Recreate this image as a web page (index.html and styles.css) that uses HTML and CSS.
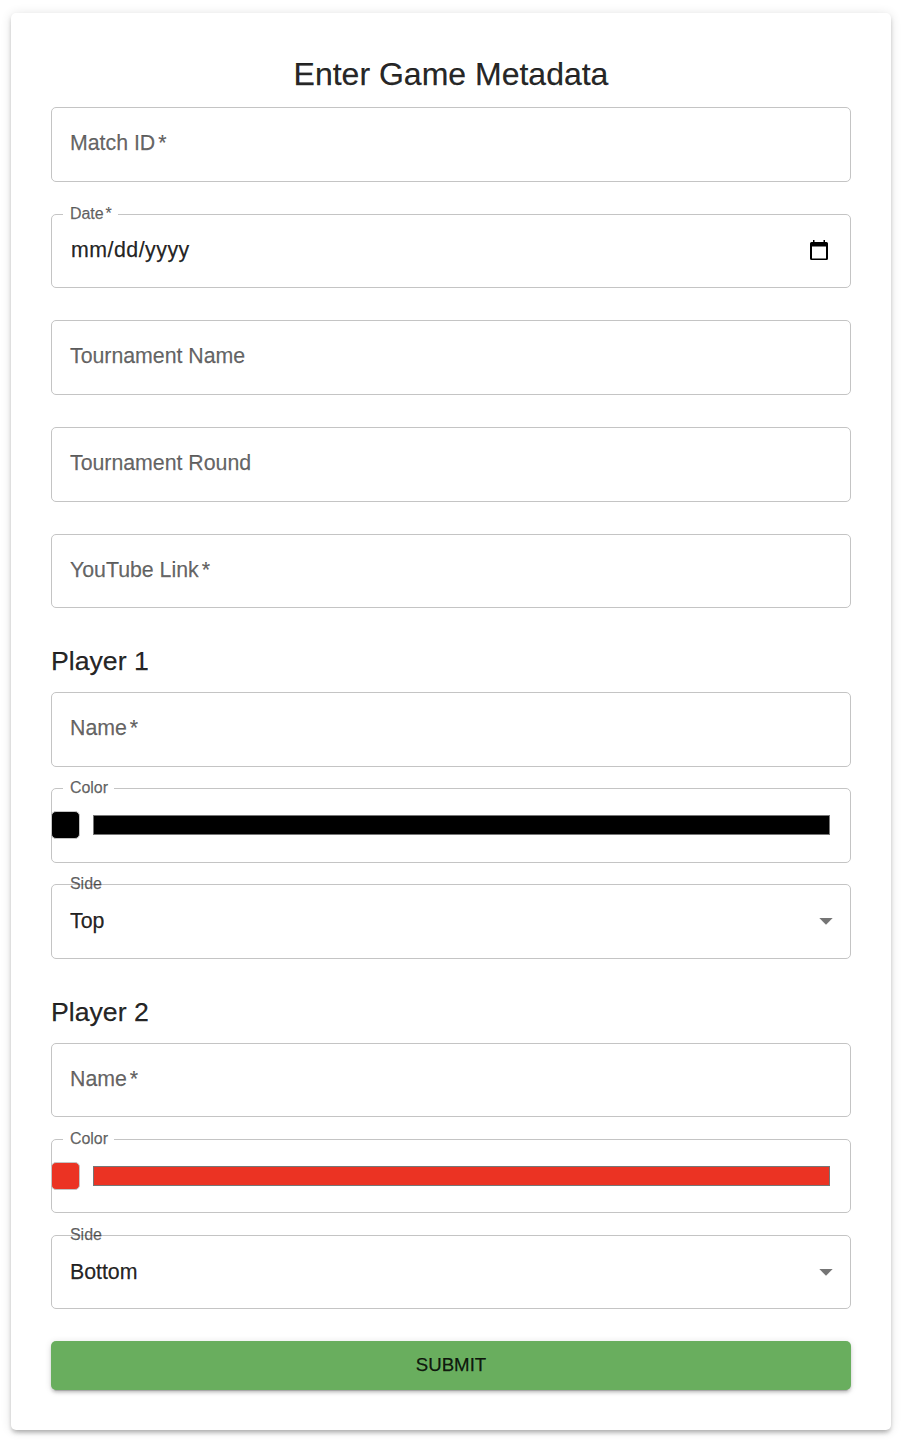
FILE: index.html
```html
<!DOCTYPE html>
<html lang="en">
<head>
<meta charset="utf-8">
<title>Enter Game Metadata</title>
<link rel="stylesheet" href="styles.css">
</head>
<body>
<form class="card">
  <h1 class="title">Enter Game Metadata</h1>
  <div class="fields">
    <div class="field"><span class="label">Match ID<i class="req">*</i></span></div>
    <div class="field short">
      <span class="float notch">Date<i class="req">*</i></span>
      <span class="value date">mm/dd/yyyy</span>
      <svg class="calendar" width="18" height="20" viewBox="0 0 18 20"><path fill="#000" fill-rule="evenodd" d="M3 0h1.500v2h9V0H15v2h1.500q1.500 0 1.500 1.500v15q0 1.500-1.500 1.500h-15Q0 20 0 18.500v-15Q0 2 1.500 2H3zM2 6.500v12h14v-12z"/></svg>
    </div>
    <div class="field"><span class="label">Tournament Name</span></div>
    <div class="field"><span class="label">Tournament Round</span></div>
    <div class="field short"><span class="label">YouTube Link<i class="req">*</i></span></div>
  </div>

  <h2 class="heading">Player 1</h2>
  <div class="player">
    <div class="field"><span class="label">Name<i class="req">*</i></span></div>
    <div class="field color">
      <span class="float notch">Color</span>
      <span class="swatch black"></span>
      <span class="bar black"></span>
    </div>
    <div class="field">
      <span class="float">Side</span>
      <span class="value">Top</span>
      <svg class="arrow" width="14" height="7" viewBox="0 0 14 7"><path fill="#757575" d="M0.300 0h13.400L7 6.670z"/></svg>
    </div>
  </div>

  <h2 class="heading">Player 2</h2>
  <div class="player second">
    <div class="field short"><span class="label">Name<i class="req">*</i></span></div>
    <div class="field short color">
      <span class="float notch">Color</span>
      <span class="swatch red"></span>
      <span class="bar red"></span>
    </div>
    <div class="field short">
      <span class="float">Side</span>
      <span class="value">Bottom</span>
      <svg class="arrow" width="14" height="7" viewBox="0 0 14 7"><path fill="#757575" d="M0.300 0h13.400L7 6.670z"/></svg>
    </div>
  </div>
  <button class="submit" type="button">SUBMIT</button>
</form>
</body>
</html>
```
FILE: styles.css
```css
* { box-sizing: border-box; }
body {
  margin: 0;
  padding: 13px 15px 10px 11px;
  background: #fff;
  color: rgba(0, 0, 0, .87);
  font-family: "Liberation Sans", Arial, sans-serif;
  -webkit-text-stroke: .25px;
}
.card {
  height: 1417px;
  padding: 40px;
  border-radius: 5px;
  background: #fff;
  box-shadow: 0 4px 5px -3px rgba(0, 0, 0, .2), 0 3px 4px rgba(0, 0, 0, .14), 0 1px 11px rgba(0, 0, 0, .12);
}
.title {
  margin: 0 0 11px;
  font-size: 32px;
  font-weight: 400;
  line-height: 43px;
  text-align: center;
}
.fields { display: flex; flex-direction: column; gap: 32px; }
.player { display: flex; flex-direction: column; gap: 21px; }
.player.second { gap: 22px; }
.field {
  position: relative;
  display: flex;
  align-items: center;
  justify-content: space-between;
  height: 75px;
  padding: 0 18px;
  border: 1px solid #c4c4c4;
  border-radius: 5px;
}
.field.short { height: 74px; }
.label, .value {
  font-size: 21.33px;
  line-height: 30px;
  letter-spacing: -.02px;
  white-space: nowrap;
}
.label { color: rgba(0, 0, 0, .6); margin-top: -3px; }
.value { margin-top: -1px; }
.req { margin-left: 3px; font-style: normal; }
.value.date { margin-left: 1px; margin-top: -2px; letter-spacing: .5px; }
.float {
  position: absolute;
  left: 18px;
  top: -11px;
  color: rgba(0, 0, 0, .6);
  font-size: 16px;
  line-height: 20px;
  letter-spacing: -.05px;
  white-space: nowrap;
}
.notch { left: 11px; padding: 0 6px 0 7px; background: #fff; }
.float .req { margin-left: 2px; }
.calendar { margin: -2px 4px 0 0; }
.arrow { margin-right: -1px; }
.field.color { justify-content: flex-start; padding: 0 20px 1px 0; }
.short.color { padding-bottom: 0; }
.swatch {
  flex: none;
  width: 29px;
  height: 28px;
  margin: 0 13px 0 -1px;
  border: 1px solid #c4c4c4;
  border-radius: 5px;
}
.bar { flex: 1; height: 20px; border: 1px solid #767676; }
.black { background: #000; }
.red { background: #eb3323; }
.heading {
  margin: 32px 0 10px;
  font-size: 26.67px;
  font-weight: 400;
  line-height: 42px;
  letter-spacing: 0;
}
.submit {
  display: block;
  width: 100%;
  height: 49px;
  margin-top: 32px;
  padding: 0 0 2px;
  border: 0;
  border-radius: 5px;
  background: #69ae5e;
  box-shadow: 0 4px 1px -3px rgba(0, 0, 0, .2), 0 3px 3px rgba(0, 0, 0, .14), 0 1px 7px rgba(0, 0, 0, .12);
  color: rgba(0, 0, 0, .87);
  font-family: inherit;
  font-size: 18.67px;
}
```
